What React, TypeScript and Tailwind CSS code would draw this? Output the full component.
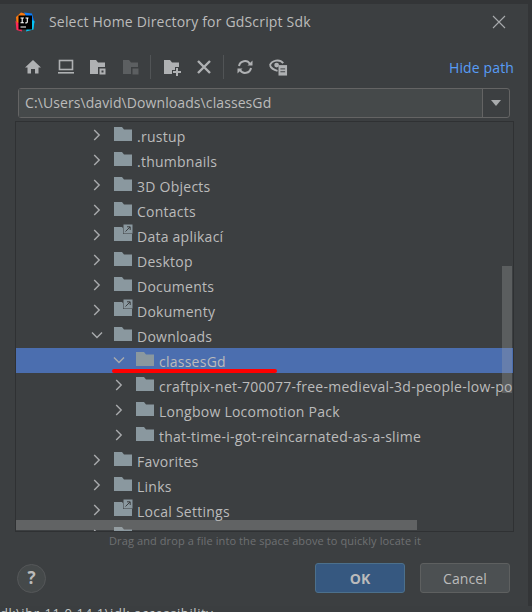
const font = "[font-family:'Open_Sans','Noto_Sans',sans-serif]";

const rows = [
  { name: ".rustup", depth: 0 },
  { name: ".thumbnails", depth: 0 },
  { name: "3D Objects", depth: 0 },
  { name: "Contacts", depth: 0 },
  { name: "Data aplikací", depth: 0, link: true },
  { name: "Desktop", depth: 0 },
  { name: "Documents", depth: 0 },
  { name: "Dokumenty", depth: 0, link: true },
  { name: "Downloads", depth: 0, open: true },
  { name: "classesGd", depth: 1, open: true, selected: true },
  { name: "craftpix-net-700077-free-medieval-3d-people-low-poly-pack", depth: 1 },
  { name: "Longbow Locomotion Pack", depth: 1 },
  { name: "that-time-i-got-reincarnated-as-a-slime", depth: 1 },
  { name: "Favorites", depth: 0 },
  { name: "Links", depth: 0 },
  { name: "Local Settings", depth: 0, link: true },
  { name: "", depth: 0 },
];

function Logo() {
  return (
    <svg width="20" height="20" viewBox="0 0 20 20" className="shrink-0">
      <path d="M1 5 L6 0.5 L11 2 L6 11 L1.5 11 Z" fill="#f97a12" />
      <path d="M9 0.5 L17 1.5 L19.5 11 L13 7 Z" fill="#087cfa" />
      <path d="M14 7 L19.5 9 L18.5 17.5 L11 19.5 Z" fill="#07c3f2" />
      <path d="M0.5 9 L6 13 L7 19.5 L1.5 18 Z" fill="#fe2857" />
      <rect x="3.5" y="3.5" width="13.5" height="14" fill="#000" />
      <path d="M5.5 6 h3.4 M7.2 6 v4.8 M5.5 10.8 h3.4 M10.5 6 h3 M12.3 6 v4 q0 .9-1 .9 h-1" stroke="#fff" strokeWidth="1.1" fill="none" />
      <rect x="5.5" y="14.5" width="5.5" height="1" fill="#fff" />
    </svg>
  );
}

function Home() {
  return (
    <svg width="18" height="18" viewBox="0 0 18 18" fill="#afb1b3">
      <path d="M9 2 L17 9.5 H14.5 V15.5 H11 V11 H7 V15.5 H3.5 V9.5 H1 Z" />
    </svg>
  );
}

function Desktop() {
  return (
    <svg width="18" height="18" viewBox="0 0 18 18" fill="none" stroke="#afb1b3">
      <rect x="2.5" y="2.5" width="13" height="9" strokeWidth="1.6" />
      <rect x="1" y="14" width="16" height="1.6" fill="#afb1b3" stroke="none" />
    </svg>
  );
}

function FolderBadge({ dim }: { dim?: boolean }) {
  const c = dim ? "#5c5f61" : "#afb1b3";
  return (
    <svg width="18" height="18" viewBox="0 0 18 18">
      <path d="M1 2 H7 L9 4.5 H16 V9 H9 V16 H1 Z" fill={c} />
      <rect x="10.5" y="10.5" width="6" height="6" fill={c} />
      {!dim && <rect x="12.5" y="12.5" width="2" height="2" fill="#3c3f41" />}
    </svg>
  );
}

function NewFolder() {
  return (
    <svg width="18" height="18" viewBox="0 0 18 18" fill="#afb1b3">
      <path d="M1 2 H7 L9 4.5 H16 V9 H12 V12 H9 V16 H1 Z" />
      <path d="M13 10 H15 V13 H18 V15 H15 V18 H13 V15 H10 V13 H13 Z" />
    </svg>
  );
}

function Cross() {
  return (
    <svg width="18" height="18" viewBox="0 0 18 18" stroke="#afb1b3" strokeWidth="2.4">
      <path d="M3 3 L15 15 M15 3 L3 15" />
    </svg>
  );
}

function Refresh() {
  return (
    <svg width="18" height="18" viewBox="0 0 18 18" fill="none" stroke="#afb1b3" strokeWidth="2">
      <path d="M3 8 A6 6 0 0 1 14 6" />
      <path d="M15 10 A6 6 0 0 1 4 12" />
      <path d="M16.5 2.5 V7.5 H11.5 Z" fill="#afb1b3" stroke="none" />
      <path d="M1.5 15.5 V10.5 H6.5 Z" fill="#afb1b3" stroke="none" />
    </svg>
  );
}

function EyeDoc() {
  return (
    <svg width="19" height="18" viewBox="0 0 20 18" fill="none">
      <path d="M1 7 C3 2 11 0 15 5" stroke="#afb1b3" strokeWidth="2" />
      <path d="M1 7 C2 10 5 12 9 13" stroke="#afb1b3" strokeWidth="2" />
      <circle cx="8" cy="7" r="2.5" fill="#afb1b3" />
      <rect x="10" y="7" width="9" height="11" fill="#afb1b3" />
      <path d="M12 11 H17 M12 14 H17" stroke="#3c3f41" />
    </svg>
  );
}

function Chevron({ open }: { open?: boolean }) {
  return (
    <svg width="12" height="12" viewBox="0 0 12 12" fill="none" stroke="#a9abad" strokeWidth="1.4" className="shrink-0 -mt-[1px]">
      {open ? <path d="M1 3.5 L6 8.5 L11 3.5" /> : <path d="M3.2 1 L8.2 6 L3.2 11" />}
    </svg>
  );
}

function Folder({ link }: { link?: boolean }) {
  return (
    <span className="relative block shrink-0 w-[18px] h-[14px] -mt-[3px]">
      <svg width="18" height="14" viewBox="0 0 18 14" fill="#8a989f" className="block">
        <path d="M0 0 H8 L10 2.5 H18 V14 H0 Z" />
      </svg>
      {link && (
        <svg width="10" height="10" viewBox="0 0 10 10" className="absolute -right-[1px] -top-[3px]">
          <rect width="10" height="10" fill="#3c3f41" />
          <rect x="0.5" y="0.5" width="9" height="9" fill="#8a989f" />
          <path d="M2.5 7.5 L7 3 M4 2.8 H7.2 V6" stroke="#3c3f41" fill="none" />
        </svg>
      )}
    </span>
  );
}

export default function App() {
  return (
    <div className={`${font} w-[532px] h-[612px] overflow-hidden bg-[#333537] flex flex-col text-[#bbbbbb]`}>
      <div className="w-[528px] h-[602px] mt-[4px] bg-[#3c3f41] flex flex-col shrink-0">
        <div className="flex items-center h-[35px] pl-[15px] pr-[22px]">
          <Logo />
          <span className="ml-[14px] text-[14px] tracking-[0.18px]">Select Home Directory for GdScript Sdk</span>
          <svg width="14" height="14" viewBox="0 0 14 14" stroke="#a9abad" strokeWidth="1.1" className="ml-auto">
            <path d="M1 1 L13 13 M13 1 L1 13" />
          </svg>
        </div>

        <div className="flex items-center h-[30px] mt-[13px] pl-[24px] pr-[14px]">
          <div className="flex items-center gap-[14.5px]">
            <Home />
            <Desktop />
            <FolderBadge />
            <FolderBadge dim />
          </div>
          <div className="w-px h-[24px] bg-[#515456] ml-[10px] mr-[12px]" />
          <div className="flex items-center gap-[14px]">
            <NewFolder />
            <Cross />
          </div>
          <div className="w-px h-[24px] bg-[#515456] ml-[10px] mr-[12px]" />
          <div className="flex items-center gap-[15px]">
            <Refresh />
            <EyeDoc />
          </div>
          <span className="ml-auto text-[14px] tracking-[0.13px] text-[#589df6]">Hide path</span>
        </div>

        <div className="flex h-[30px] mx-[18px] mt-[6px] border border-[#646464] rounded-[3px]">
          <div className="flex-1 bg-[#45494a] px-[6px] leading-[27px] text-[14px] tracking-[0.09px]">C:\Users\david\Downloads\classesGd</div>
          <div className="w-[27px] border-l border-[#646464] flex items-center justify-center">
            <svg width="10" height="6" viewBox="0 0 10 6" fill="#a9abad">
              <path d="M0 0 H10 L5 6 Z" />
            </svg>
          </div>
        </div>

        <div className="relative h-[411px] ml-[15px] w-[499px] mt-[3px] border border-[#2f3133] overflow-hidden">
          <div className="pt-[1px]">
            {rows.map((r, i) => (
              <div
                key={i}
                className={`flex items-center h-[25px] whitespace-nowrap text-[14px] tracking-[0.25px] ${r.selected ? "bg-[#4b6eaf]" : ""} ${r.depth ? "pl-[97px]" : "pl-[75px]"}`}
              >
                <Chevron open={r.open} />
                <span className="ml-[11px]">
                  <Folder link={r.link} />
                </span>
                <span className="ml-[5px] pt-[1px]">{r.name}</span>
              </div>
            ))}
          </div>
          <div className="absolute left-[96px] top-[247px] w-[165px] h-[4px] rounded-full bg-[#ff0000]" />
          <div className="absolute right-[1px] top-[144px] w-[10px] h-[127px] bg-[#a6a6a6]/30" />
          <div className="absolute left-0 bottom-[1px] w-[401px] h-[10px] bg-[#a6a6a6]/35" />
        </div>

        <div className="text-[11px] leading-[14px] mt-[2px] pl-[109px] text-[#6e7072] whitespace-nowrap tracking-[0.1px]">
          Drag and drop a file into the space above to quickly locate it
        </div>

        <div className="flex items-center h-[30px] mt-[15px] pl-[17px] pr-[18px]">
          <div className="w-[29px] h-[29px] rounded-full bg-[#45494a] border border-[#555759] flex items-center justify-center text-[17px] font-bold">?</div>
          <button className="ml-auto w-[90px] h-[30px] rounded-[3px] bg-[#365880] border border-[#4c708c] text-[14px] font-bold">OK</button>
          <button className="ml-[15px] w-[90px] h-[30px] rounded-[3px] bg-[#4c5052] border border-[#5e6060] text-[14px] tracking-[0.1px]">Cancel</button>
        </div>
      </div>
      <div className="h-[6px] text-[13px] leading-[14px] tracking-[0.6px] text-[#c4c8c8] bg-[#3b3e40] whitespace-nowrap">dk\jbr-11.0.14.1\jdk.accessibility</div>
    </div>
  );
}
